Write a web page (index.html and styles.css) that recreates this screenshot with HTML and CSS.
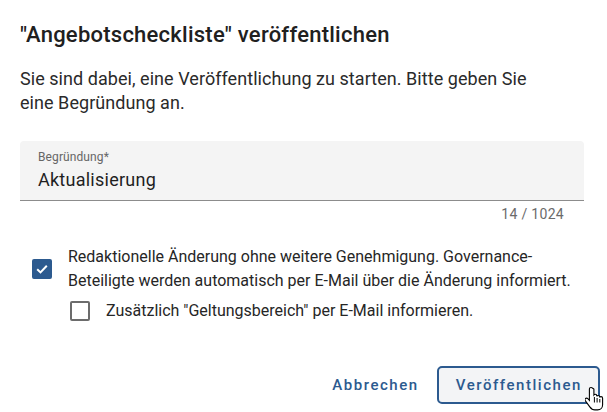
FILE: index.html
```html
<!DOCTYPE html>
<html lang="de">
<head>
<meta charset="utf-8">
<link rel="stylesheet" href="styles.css">
</head>
<body>
<div class="dialog">
  <h1 class="title">"Angebotscheckliste" veröffentlichen</h1>
  <p class="intro">Sie sind dabei, eine Veröffentlichung zu starten. Bitte geben Sie eine Begründung an.</p>
  <div class="field">
    <div class="field-box">
      <span class="field-label">Begründung*</span>
      <span class="field-value">Aktualisierung</span>
    </div>
    <div class="counter">14 / 1024</div>
  </div>
  <div class="check-row">
    <span class="box checked">
      <svg width="14" height="14" viewBox="0 0 14 14"><path d="M2.2 7.2 L5.5 10.4 L11.8 3.8" fill="none" stroke="#fff" stroke-width="2"/></svg>
    </span>
    <span class="check-text">Redaktionelle Änderung ohne weitere Genehmigung. Governance-<br>Beteiligte werden automatisch per E-Mail über die Änderung informiert.</span>
  </div>
  <div class="check-row sub">
    <span class="box"></span>
    <span class="check-text">Zusätzlich "Geltungsbereich" per E-Mail informieren.</span>
  </div>
  <div class="actions">
    <button class="btn text-btn">Abbrechen</button>
    <button class="btn outline-btn">Veröffentlichen
      <svg class="cursor" width="20" height="26" viewBox="0 0 20 26"><path d="M6 1.5c-1 0-1.6.7-1.6 1.6v11.2l-1.6-1.7c-.7-.7-1.8-.7-2.4 0-.6.6-.5 1.5 0 2.2l4.4 6.1c1.1 1.6 2.7 3 5.1 3h2.7c3 0 5-2.3 5-5.2v-6.5c0-.9-.7-1.6-1.6-1.6-.6 0-1.1.3-1.3.8v-.3c0-.9-.7-1.6-1.6-1.6-.6 0-1.1.3-1.3.8v-.4c0-.9-.7-1.6-1.6-1.6-.5 0-1 .3-1.3.7V3.1C7.6 2.2 7 1.5 6 1.5z" fill="#fff" stroke="#000" stroke-width="1.1"/><path d="M9.4 11v5.5M12.1 12v4.5M14.8 13v3.5" stroke="#000" stroke-width="1"/></svg>
    </button>
  </div>
</div>
</body>
</html>
```

FILE: styles.css
```css
* { box-sizing: border-box; }
html, body { margin: 0; padding: 0; background: #fff; }
body { font-family: Roboto, "Noto Sans", sans-serif; color: #212121; width: 607px; height: 412px; overflow: hidden; }
.dialog { padding: 21px 23px 0 20px; display: flex; flex-direction: column; }
.title { margin: 0; font-size: 22px; font-weight: 500; line-height: 28px; color: #202020; letter-spacing: 0.25px; }
.intro { margin: 18px 0 0; padding-right: 30px; font-size: 18px; line-height: 24px; color: #2a2a2a; letter-spacing: 0.05px; }
.field { margin-top: 26px; }
.field-box { background: #f4f4f4; border-radius: 4px 4px 0 0; border-bottom: 1px solid #8c8c8c; height: 60px; padding: 8px 18px 0; display: flex; flex-direction: column; }
.field-label { font-size: 12px; line-height: 16px; color: #666; letter-spacing: 0.1px; }
.field-value { font-size: 18px; line-height: 24px; color: #1f1f1f; margin-top: 3px; letter-spacing: 0.25px; }
.counter { text-align: right; font-size: 14px; line-height: 16px; color: #6b6b6b; padding: 5px 20px 0 0; letter-spacing: 0.3px; }
.check-row { display: flex; align-items: center; gap: 16px; margin-top: 23px; padding-left: 12px; }
.check-row.sub { margin-top: 6px; padding-left: 50px; }
.box { width: 20px; height: 20px; flex: none; border: 2px solid #6c6c6c; border-radius: 2px; display: flex; align-items: center; justify-content: center; }
.box.checked { background: #2c5a8f; border-color: #2c5a8f; }
.check-text { font-size: 16px; line-height: 24px; color: #262626; letter-spacing: 0; }
.actions { display: flex; justify-content: flex-end; align-items: center; gap: 16px; margin: 43px -16px 0 0; }
.btn { font-family: Roboto, "Noto Sans", sans-serif; font-size: 15px; font-weight: 500; letter-spacing: 1.55px; color: #2c5a8f; background: none; border: none; cursor: pointer; }
.text-btn { padding: 0 2px; height: 38px; }
.outline-btn { position: relative; height: 38px; padding: 0 16px 0 17px; border: 2px solid #2c5a8f; border-radius: 5px; background: #f3f4f6; }
.cursor { position: absolute; left: 146px; top: 18px; }
```
